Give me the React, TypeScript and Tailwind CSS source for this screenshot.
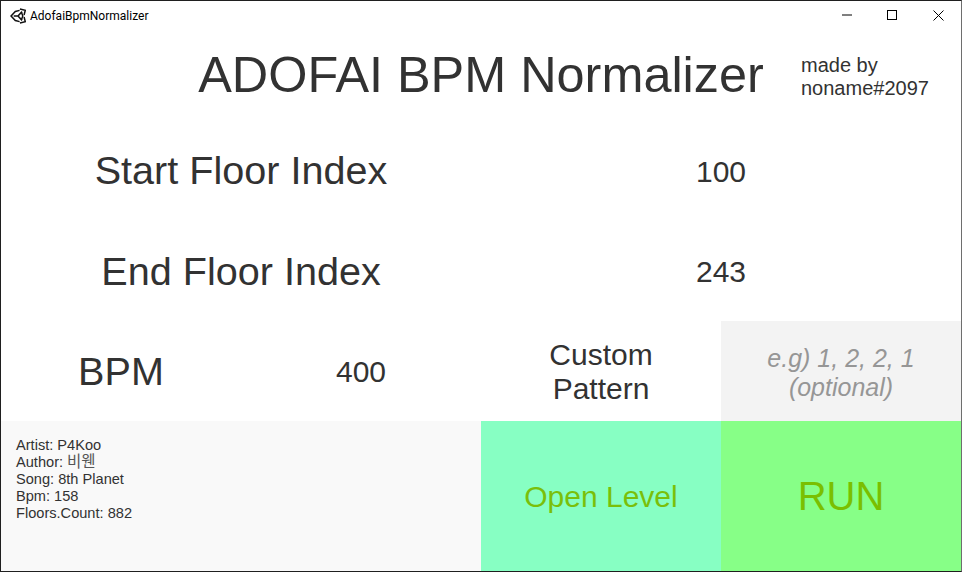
const Cell = ({ className = "", children }: { className?: string; children?: React.ReactNode }) => (
  <div className={`flex items-center justify-center text-center text-[#323232] ${className}`}>{children}</div>
);

function UnityLogo() {
  return (
    <svg width="16" height="16" viewBox="0 0 15 15" className="shrink-0" fill="none" stroke="#111111" strokeWidth="1.4">
      <path d="M9.3 1 14.3 2.2 13.2 6.6" />
      <path d="M9.3 14 14.3 12.8 13.2 8.4" />
      <path d="M9 2.2 5 3.3 1 7.5 5 11.7 9 12.8" />
      <path d="M3.5 7.5H7.5L11.3 3.4M7.5 7.5 11.3 11.6" />
      <path d="M10.8 4.3 12 7.5 10.8 10.7" />
    </svg>
  );
}

export default function App() {
  return (
    <div className="w-[962px] h-[572px] bg-white flex flex-col border border-[#1f1f1f] border-r-[#6e6e6e] overflow-hidden font-['Liberation_Sans',_'Noto_Sans_CJK_KR',_sans-serif]">
      <div className="h-[30px] shrink-0 flex items-center justify-between">
        <div className="flex items-center gap-[4px] pl-[9px]">
          <UnityLogo />
          <span className="text-[12px] text-black font-['Roboto',_sans-serif]">AdofaiBpmNormalizer</span>
        </div>
        <div className="flex items-start self-start text-black">
          <div className="w-[46px] h-[28px] pl-[2px] flex items-center justify-center">
            <svg width="10" height="10" viewBox="0 0 10 10"><path d="M0 5h10" stroke="#000" strokeWidth="1" /></svg>
          </div>
          <div className="w-[46px] h-[28px] flex items-center justify-center">
            <svg width="10" height="10" viewBox="0 0 10 10"><rect x=".5" y=".5" width="9" height="9" fill="none" stroke="#000" /></svg>
          </div>
          <div className="w-[46px] h-[28px] flex items-center justify-center">
            <svg width="11" height="11" viewBox="0 0 11 11"><path d="M.5.5l10 10M10.5.5l-10 10" stroke="#000" strokeWidth="1" /></svg>
          </div>
        </div>
      </div>

      <div className="h-[90px] shrink-0 flex">
        <div className="w-[960px] shrink-0 flex items-center justify-center pb-[2px]">
          <span className="text-[50.4px] leading-none text-[#323232]">ADOFAI BPM Normalizer</span>
        </div>
        <div className="w-[200px] shrink-0 -ml-[160px] pt-[23px] text-[20px] leading-[23px] text-[#323232]">
          made by<br />noname#2097
        </div>
      </div>

      <div className="h-[100px] shrink-0 grid grid-cols-[480px_480px]">
        <Cell className="text-[39.6px]">Start Floor Index</Cell>
        <Cell className="text-[30px]">100</Cell>
      </div>
      <div className="h-[100px] shrink-0 grid grid-cols-[480px_480px]">
        <Cell className="text-[39.6px] pt-[1px]">End Floor Index</Cell>
        <Cell className="text-[30px]">243</Cell>
      </div>
      <div className="h-[100px] shrink-0 grid grid-cols-[240px_240px_240px_240px]">
        <Cell className="text-[39.6px] pt-[2px]">BPM</Cell>
        <Cell className="text-[30px]">400</Cell>
        <Cell className="text-[30px] leading-[34px] pt-[2px]">Custom<br />Pattern</Cell>
        <Cell className="bg-[#f3f3f3] text-[25px] leading-[29px] italic !text-[#969696] pt-[4px]">e.g) 1, 2, 2, 1<br />(optional)</Cell>
      </div>
      <div className="flex-1 grid grid-cols-[480px_240px_240px]">
        <div className="bg-[#f9f9f9] pl-[15px] pt-[16px] text-[14.6px] leading-[17px] text-[#323232]">
          <div className="h-[17px]">Artist: P4Koo</div>
          <div className="h-[17px]">Author: <span className="text-[15.5px] leading-[16px] text-[#555555]">비웬</span></div>
          <div className="h-[17px]">Song: 8th Planet</div>
          <div className="h-[17px]">Bpm: 158</div>
          <div className="h-[17px]">Floors.Count: 882</div>
        </div>
        <Cell className="bg-[#87ffc3] text-[30px] !text-[#7abf0a]">Open Level</Cell>
        <Cell className="bg-[#87ff87] text-[40px] !text-[#7abf00]">RUN</Cell>
      </div>
    </div>
  );
}
